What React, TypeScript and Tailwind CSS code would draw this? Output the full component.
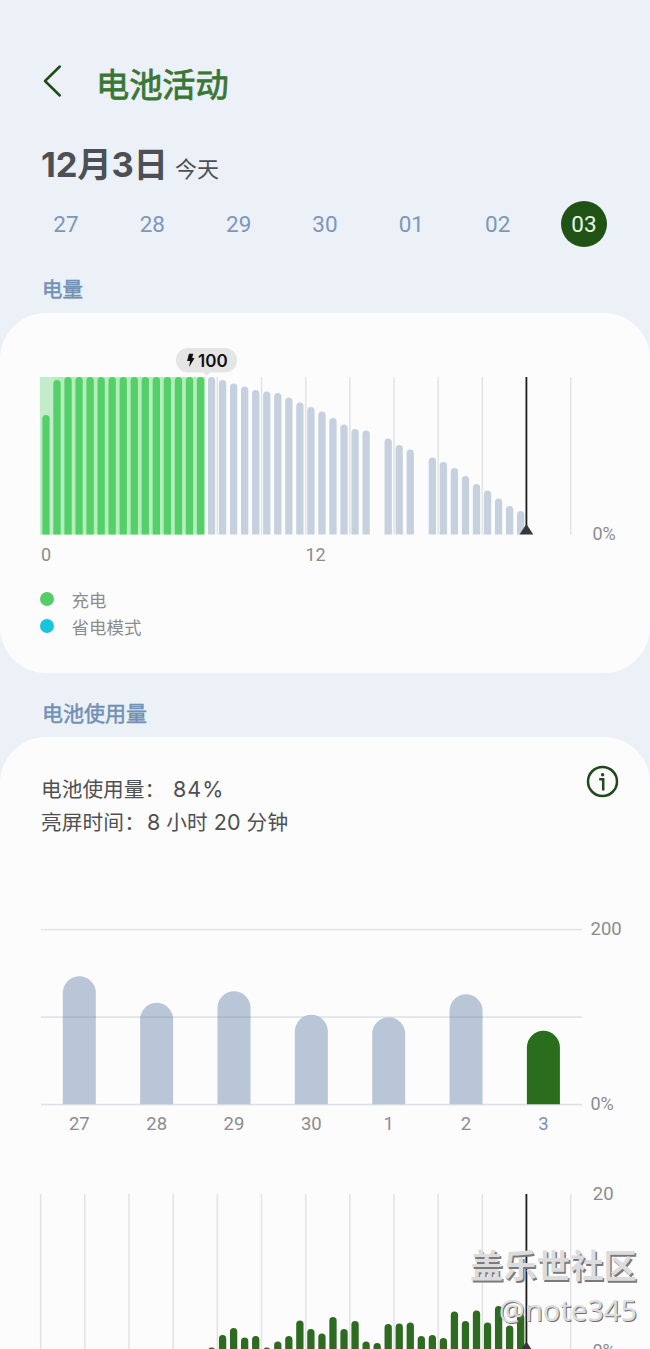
const BASE_X = 42.3;
const STEP = 11.04;
const BAR_WIDTH = 7.3;

const days = ["27", "28", "29", "30", "01", "02", "03"];

// bar heights in px, one per half hour, 0 = no data
const levels = [
  119.5, 154.5, 157.5, 157.5, 157.5, 157.5, 157.5, 157.5, 157.5, 157.5, 157.5, 157.5, 157.5, 157.5, 157.5,
  157.5, 154.5, 151, 148, 144.5, 143, 141.5, 137, 132, 127.5, 123, 116.5, 110, 105.5, 104,
  0, 96, 89.5, 85, 0, 77, 72.5, 66.5, 58.5, 50.5, 44, 36, 28.5, 23.5,
];
const CHARGED_UNTIL = 15;

const weekly = [
  { label: "27", height: 128 },
  { label: "28", height: 101.5 },
  { label: "29", height: 113 },
  { label: "30", height: 89.5 },
  { label: "1", height: 87 },
  { label: "2", height: 110 },
  { label: "3", height: 73.5 },
];

// top edges inside the hourly chart, starting at slot 15
const hourlyTops = [
  157.6, 145, 138, 147.5, 146, 157.6, 151.5, 146, 130.5, 139, 143.5, 127, 139, 131, 151.5, 153,
  134, 133.5, 132.5, 146, 145, 148, 121.5, 131, 120.5, 132.5, 116, 135.5, 124,
];

const gridLines = Array.from({ length: 13 }, (_, i) => 40.6 + i * 44.17);

const barPath = (x: number, top: number, bottom: number, width: number) => {
  const r = width / 2;
  return `M${x} ${bottom}V${top + r}a${r} ${r} 0 0 1 ${width} 0V${bottom}Z`;
};

const Header = () => (
  <header className="px-10 pt-[61px]">
    <div className="flex h-12 items-center">
      <svg width="24" height="36" viewBox="0 0 24 36" fill="none" className="-mt-2">
        <path d="M19.8 3.5 5 18 19.8 32.5" stroke="#1e4a1c" strokeWidth="2.5" strokeLinecap="round" strokeLinejoin="round" />
      </svg>
      <h1 className="ml-8 text-[33.2px] leading-12 text-[#3b7637] [-webkit-text-stroke:0.8px_#3b7637]">电池活动</h1>
    </div>
    <div className="mt-8 flex h-12 items-baseline pl-px text-[#4c5054]">
      <span className="text-[34.5px] font-bold leading-12 tracking-[-0.2px]">12月3日</span>
      <span className="ml-[7px] text-[22px] leading-12">今天</span>
    </div>
  </header>
);

const DayPicker = () => (
  <nav className="mt-3 flex justify-between px-[43px]">
    {days.map((day) => (
      <button
        key={day}
        className={
          day === "03"
            ? "size-[46px] rounded-full bg-[#1f5214] text-[22.5px] leading-[46px] text-[#eaf5e8]"
            : "size-[46px] text-[22.5px] leading-[46px] text-[#7d97b9]"
        }
      >
        {day}
      </button>
    ))}
  </nav>
);

const LevelChart = () => (
  <svg width="650" height="240" viewBox="0 0 650 240" className="block">
    {gridLines.map((x) => (
      <rect key={x} x={x - 0.7} y="47" width="1.5" height="157.5" fill="#e3e3e4" />
    ))}
    <rect x="40" y="47" width="165" height="157.5" fill="#b4efbb" />
    <rect x="40" y="47" width="13" height="157.5" fill="#c3eccb" />
    {levels.map((height, i) =>
      height ? (
        <path
          key={i}
          d={barPath(BASE_X + i * STEP, 204.5 - height, 204.5, BAR_WIDTH)}
          fill={i < CHARGED_UNTIL ? "#54cf6a" : "#c6d1e0"}
        />
      ) : null
    )}
    <rect x="525.5" y="47" width="1.8" height="157" fill="#202024" />
    <path d="M526.4 194 533.3 204.5H519.5Z" fill="#36363c" />
    {/* charge bubble */}
    <rect x="176" y="18" width="61" height="24.5" rx="12.2" fill="#e5e5e6" />
    <path d="M202.5 42 206.6 45.5 210.5 42Z" fill="#e5e5e6" />
    <path d="M189 23.8h4.2l-1 4.3h2.4l-5.5 9 1-6.2h-3Z" fill="#111" />
    <text x="198" y="37" fontSize="17" fontWeight="600" fill="#111" className="font-['Inter']">100</text>
    <g fontSize="18" fill="#8c8c8e" className="font-['Roboto']">
      <text x="41" y="231">0</text>
      <text x="305.5" y="231">12</text>
      <text x="592.5" y="210">0%</text>
    </g>
  </svg>
);

const WeekChart = () => (
  <svg width="650" height="250" viewBox="0 0 650 250" className="block font-['Roboto']">
    <rect x="41" y="28.8" width="541" height="1.6" fill="#e3e4e6" />
    <rect x="41" y="116.3" width="541" height="1.6" fill="#e0e1e4" />
    <rect x="41" y="203.8" width="541" height="1.6" fill="#dfe0e3" />
    {weekly.map(({ label, height }, i) => {
      const x = 62.8 + i * 77.35;
      const active = label === "3";
      return (
        <g key={label}>
          <path d={barPath(x, 204.3 - height, 204.3, 33)} fill={active ? "#2a6d1d" : "#b8c6d8"} />
          {!active && height > 90 && <rect x={x} y="116.3" width="33" height="1.6" fill="#a9b7ca" />}
          <text x={x + 16.5} y="230" textAnchor="middle" fontSize="18.5" fill={active ? "#7d90b3" : "#8c8c8e"}>
            {label}
          </text>
        </g>
      );
    })}
    <g fontSize="18.5" fill="#8c8c8e">
      <text x="590.5" y="35">200</text>
      <text x="590.5" y="210" fontSize="18">0%</text>
    </g>
  </svg>
);

const HourChart = () => (
  <svg width="650" height="159" viewBox="0 0 650 159" className="block overflow-visible">
    {gridLines.map((x) => (
      <rect key={x} x={x - 0.7} y="4" width="1.5" height="156" fill="#e3e3e4" />
    ))}
    {hourlyTops.map((top, i) => (
      <path key={i} d={barPath(BASE_X + (i + 15) * STEP, top, 180, BAR_WIDTH)} fill="#2d6b20" />
    ))}
    <rect x="525.5" y="4" width="1.8" height="156" fill="#202024" />
    <path d="M526.4 151.5 533.3 162H519.5Z" fill="#36363c" />
    <g fontSize="18.5" fill="#8c8c8e" className="font-['Roboto']">
      <text x="592.8" y="9.5">20</text>
      <text x="592.5" y="167" fontSize="18">0%</text>
    </g>
  </svg>
);

const App = () => {
  return (
    <div className="relative h-[1349px] w-[650px] overflow-hidden bg-[#ecf0f7] font-['Inter','Noto_Sans_CJK_SC',sans-serif]">
      <Header />
      <div className="font-['Roboto',sans-serif]">
        <DayPicker />
      </div>

      <h2 className="mt-[27px] pl-[42px] text-[20.5px] leading-8 text-[#7390b5] [-webkit-text-stroke:0.5px_#7390b5]">电量</h2>
      <section className="mt-[7px] h-[360px] rounded-[46px] bg-[#fcfcfc] pt-[17px]">
        <LevelChart />
        <ul className="mt-[17px] pl-10 text-[17.5px] leading-[27px] text-[#8c8c8e]">
          <li className="flex items-center">
            <span className="-mt-1 mr-[17.5px] size-3.5 rounded-full bg-[#52cd68]" />
            充电
          </li>
          <li className="flex items-center">
            <span className="-mt-1 mr-[17.5px] size-3.5 rounded-full bg-[#17c5df]" />
            省电模式
          </li>
        </ul>
      </section>

      <h2 className="mt-[25px] pl-[42px] text-[21px] leading-8 text-[#7390b5] [-webkit-text-stroke:0.5px_#7390b5]">电池使用量</h2>
      <section className="mt-[7px] rounded-t-[46px] bg-[#fcfcfc]">
        <div className="flex h-[163px] justify-between pl-[41px] pr-[31px] pt-9">
          <div className="text-[20.7px] leading-[33px] text-[#505052]">
            <p>电池使用量： <span className="ml-[2px] text-[21.5px] tracking-[1px]">84%</span></p>
            <p className="tracking-[0.1px]">
              亮屏时间：<span className="ml-[2px] text-[21.5px]">8</span> 小时 <span className="text-[21.5px]">20</span> 分钟
            </p>
          </div>
          <svg width="33" height="33" viewBox="0 0 33 33" fill="none" stroke="#1e4a1c" strokeWidth="2.5" className="-mt-2">
            <circle cx="16.5" cy="16.5" r="14.5" />
            <path d="M13.2 14.2h4V25.5" />
            <circle cx="16.6" cy="9.8" r="1.7" fill="#1e4a1c" stroke="none" />
          </svg>
        </div>
        <WeekChart />
        <div className="mt-10">
          <HourChart />
        </div>
      </section>

      {/* forum watermark */}
      <div className="absolute right-[13px] top-[1243px] text-right text-[#dcdcdd] [text-shadow:1.5px_2px_0_#7a7a7c]">
        <p className="text-[33.4px] font-bold leading-[46px]">盖乐世社区</p>
        <p className="font-['Noto_Sans'] text-[29px] leading-[42px] [text-shadow:1px_1px_0_#6e6e70]">@note345</p>
      </div>
    </div>
  );
};

export default App;
